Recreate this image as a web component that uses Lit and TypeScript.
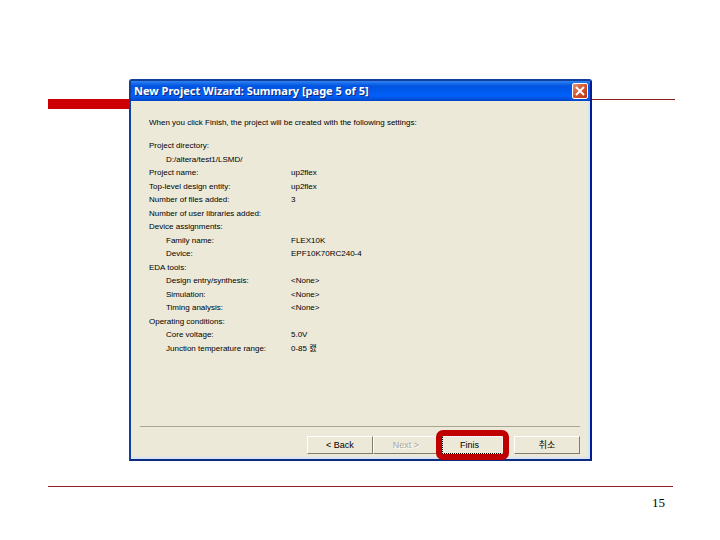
import { LitElement, html, css } from "lit";
import { customElement } from "lit/decorators.js";
import { classMap } from "lit/directives/class-map.js";

interface Row {
  label: string;
  value?: string;
  indent?: boolean;
}

const ROWS: Row[] = [
  { label: "Project directory:" },
  { label: "D:/altera/test1/LSMD/", indent: true },
  { label: "Project name:", value: "up2flex" },
  { label: "Top-level design entity:", value: "up2flex" },
  { label: "Number of files added:", value: "3" },
  { label: "Number of user libraries added:" },
  { label: "Device assignments:" },
  { label: "Family name:", value: "FLEX10K", indent: true },
  { label: "Device:", value: "EPF10K70RC240-4", indent: true },
  { label: "EDA tools:" },
  { label: "Design entry/synthesis:", value: "<None>", indent: true },
  { label: "Simulation:", value: "<None>", indent: true },
  { label: "Timing analysis:", value: "<None>", indent: true },
  { label: "Operating conditions:" },
  { label: "Core voltage:", value: "5.0V", indent: true },
  { label: "Junction temperature range:", value: "0-85 캜", indent: true },
];

@customElement("wizard-dialog")
export class WizardDialog extends LitElement {
  static styles = css`
    :host {
      display: block;
      font: 8px/13px "Liberation Sans", "Noto Sans CJK KR", sans-serif;
      color: #000;
    }
    .window {
      box-sizing: border-box;
      border: 2px solid #123f9c;
      border-right-color: #001c94;
      border-bottom-color: #0b2c80;
      border-radius: 3px 3px 0 0;
      background: #ece9d8;
      box-shadow: inset -2px -2px 0 #d6e4f5;
    }
    .titlebar {
      display: flex;
      align-items: center;
      justify-content: space-between;
      height: 20px;
      padding: 0 2px 0 3px;
      background: linear-gradient(#2f83f2 0, #0054e0 25%, #0060fa 75%, #0345c4 100%);
    }
    h1 {
      margin: 0;
      font: bold 11px/20px "Noto Sans", sans-serif;
      color: #fff;
      text-shadow: 1px 1px 0 #0a2a80;
      white-space: nowrap;
    }
    .close {
      display: flex;
      width: 16px;
      height: 16px;
      padding: 0;
      border: 1px solid #fff;
      border-radius: 2px;
      background: linear-gradient(135deg, #e8937a, #d4512c 50%, #b83a18);
    }
    .close svg {
      width: 14px;
      height: 14px;
    }
    .body {
      padding: 15px 10px 5px 9px;
    }
    .intro {
      margin: 0 0 10px 9px;
      white-space: nowrap;
    }
    table {
      width: 100%;
      height: 216px;
      border-spacing: 0;
      table-layout: fixed;
    }
    th,
    td {
      padding: 0;
      font-weight: normal;
      text-align: left;
      white-space: nowrap;
    }
    th {
      width: 151px;
      box-sizing: border-box;
      padding-left: 9px;
    }
    th.indent {
      padding-left: 26px;
    }
    .footer {
      display: flex;
      justify-content: flex-end;
      margin-top: 71px;
      padding-top: 9px;
      border-top: 1px solid #a7a594;
    }
    .push {
      box-sizing: border-box;
      width: 66px;
      height: 18px;
      padding: 0;
      border: 1px solid;
      border-color: #fff #807d70 #807d70 #fff;
      background: #ece9d8;
      color: #000;
      font: 9px/13px "Liberation Sans", "Noto Sans CJK KR", sans-serif;
    }
    .push:disabled {
      color: #aca899;
      text-shadow: 1px 1px 0 #fff;
    }
    .finish {
      position: relative;
      width: 61px;
      margin-left: 3px;
      padding-right: 6px;
      border: 1px dotted #000;
      border-top-color: #fff;
      border-right-color: #fff;
    }
    .finish::after {
      content: "";
      position: absolute;
      inset: -7px;
      border: 6px solid #c00000;
      border-radius: 7px;
    }
    .cancel {
      margin-left: 11px;
    }
  `;

  render() {
    return html`
      <section class="window" aria-label="New Project Wizard">
        <header class="titlebar">
          <h1>New Project Wizard: Summary [page 5 of 5]</h1>
          <button class="close" aria-label="Close">
            <svg viewBox="0 0 14 14" fill="none" stroke="#fff" stroke-width="2">
              <path d="M3 3L11 11M11 3L3 11" />
            </svg>
          </button>
        </header>
        <div class="body">
          <p class="intro">When you click Finish, the project will be created with the following settings:</p>
          <table>
            <tbody>
              ${ROWS.map(
                (r) => html`<tr>
                  <th scope="row" class=${classMap({ indent: !!r.indent })}>${r.label}</th>
                  <td>${r.value ?? ""}</td>
                </tr>`
              )}
            </tbody>
          </table>
          <div class="footer">
            <button class="push">&lt; Back</button>
            <button class="push" disabled>Next &gt;</button>
            <button class="push finish">Finis</button>
            <button class="push cancel">취소</button>
          </div>
        </div>
      </section>
    `;
  }
}

@customElement("app-root")
export class AppRoot extends LitElement {
  static styles = css`
    :host {
      display: block;
      min-height: 100vh;
      background: #fff;
    }
    .slide {
      display: grid;
      padding: 79px 45px 0 48px;
    }
    .rule,
    wizard-dialog {
      grid-area: 1 / 1;
    }
    .rule {
      align-self: start;
      margin-top: 20px;
      height: 10px;
      border-top: 1px solid #8c2020;
    }
    .rule::before {
      content: "";
      display: block;
      width: 50%;
      height: 10px;
      margin-top: -1px;
      background: #c00;
    }
    wizard-dialog {
      position: relative;
      margin: 0 83px 0 81px;
    }
    footer {
      margin: 25px 2px 0 0;
      padding: 8px 8px 0 0;
      border-top: 1px solid #8c2020;
      font: 13px/15px "Liberation Serif", serif;
      text-align: right;
    }
  `;

  render() {
    return html`
      <main class="slide">
        <div class="rule"></div>
        <wizard-dialog></wizard-dialog>
        <footer>15</footer>
      </main>
    `;
  }
}
